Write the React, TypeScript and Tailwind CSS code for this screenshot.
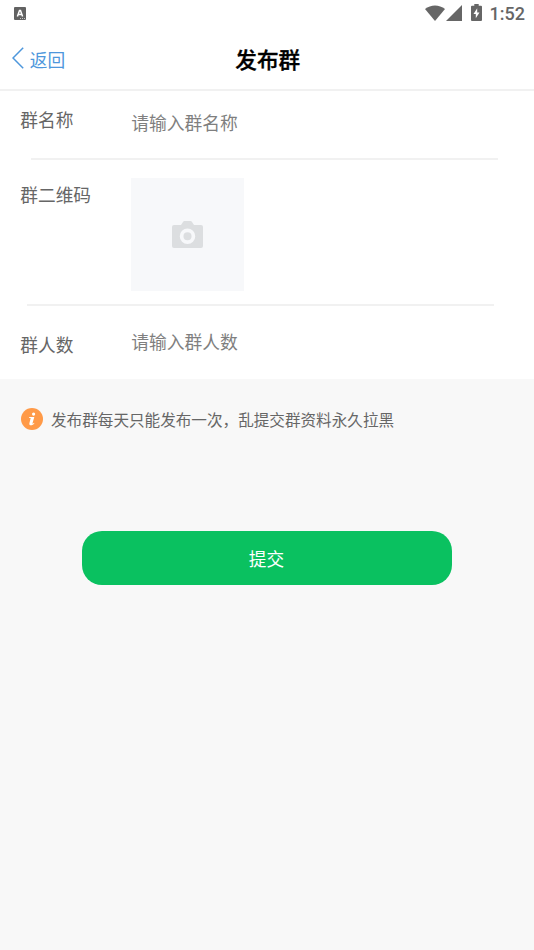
import type { ReactNode } from "react";

interface FieldProps {
    label: string;
    labelClass: string;
    className: string;
    children: ReactNode;
}

function Field({ label, labelClass, className, children }: FieldProps) {
    return (
        <div className={`flex items-start pl-[20.3px] ${className}`}>
            <label className={`w-[110.9px] shrink-0 text-[17.7px] leading-6 text-[#666] ${labelClass}`}>{label}</label>
            {children}
        </div>
    );
}

function StatusBar() {
    return (
        <div className="flex h-7 items-start justify-between pl-3.5 pr-[9px] text-[#666]">
            {/* Input method indicator */}
            <svg className="mt-[7px] h-[13px] w-3" viewBox="0 0 12 13">
                <rect width="12" height="13" rx="1" fill="#626262" />
                <path d="M3.4 9.5 5.5 3.6h1L8.6 9.5M4.2 7.6h3.6" fill="none" stroke="#fff" strokeWidth="1.5" />
                <path d="M6 11.5h1M8 11.5h1M10 11.5h1" stroke="#ddd" strokeWidth="0.8" />
            </svg>
            <div className="flex items-start">
                <svg className="mt-[5px] h-4 w-5" viewBox="0 0 20 16" fill="currentColor">
                    <path d="M0 4C5.8-.7 14.2-.7 20 4L10 16z" />
                </svg>
                <svg className="ml-[1px] mt-[5px] h-4 w-4" viewBox="0 0 16 16" fill="currentColor">
                    <path d="M16 0v16H0z" />
                </svg>
                <svg className="ml-[9px] mt-1 h-[17px] w-[11px]" viewBox="0 0 11 17">
                    <path d="M3.3 0h4.4v1.8H10a1 1 0 0 1 1 1V16a1 1 0 0 1-1 1H1a1 1 0 0 1-1-1V2.8a1 1 0 0 1 1-1h2.3z" fill="currentColor" />
                    <path d="M6.2 4.3 2.5 10h2.3v4.3L8.5 8.6H6.2z" fill="#fff" />
                </svg>
                <span className="ml-2 font-[Roboto] text-[18px] font-medium leading-7">1:52</span>
            </div>
        </div>
    );
}

export default function App() {
    return (
        <div className="min-h-[950px] w-full bg-[#f8f8f8] font-['Noto_Sans_CJK_SC',sans-serif]">
            <div className="bg-white">
                <StatusBar />
                <header className="grid h-[63px] grid-cols-3 items-center border-b-2 border-[#f1f1f1]">
                    <button className="flex items-center pl-3 text-[17.7px] leading-6 text-[#4e97dc]">
                        <svg className="mb-px mr-[5.8px] h-[22px] w-3" viewBox="0 0 12 22" fill="none" stroke="currentColor" strokeWidth="1.5">
                            <path d="M11.2.7 1 11l10.2 10.3" />
                        </svg>
                        返回
                    </button>
                    <h1 className="pl-[1.5px] text-center text-[21.6px] font-medium leading-8 text-black [-webkit-text-stroke:0.35px_black]">发布群</h1>
                </header>

                <Field label="群名称" labelClass="mt-4" className="h-[67px]">
                    <input className="mt-[19px] h-6 w-80 text-[17.8px] leading-6 outline-none placeholder:text-[#7f7f7f]" placeholder="请输入群名称" />
                </Field>
                <div className="ml-[31px] h-0.5 w-[467px] bg-[#f1f1f1]" />

                <Field label="群二维码" labelClass="mt-[22px]" className="h-36">
                    <button className="mt-[18px] flex h-[113px] w-[113px] items-center justify-center bg-[#f7f8fa]">
                        <svg className="h-[27px] w-[31px]" viewBox="0 0 31 27">
                            <path d="M2 4h7l2-3a2 2 0 0 1 1.5-1h6A2 2 0 0 1 20 1l2 3h7a2 2 0 0 1 2 2v19a2 2 0 0 1-2 2H2a2 2 0 0 1-2-2V6a2 2 0 0 1 2-2z" fill="#dcdee0" />
                            <circle cx="15.5" cy="15.3" r="5.9" fill="none" stroke="#f7f8fa" strokeWidth="3.7" />
                        </svg>
                    </button>
                </Field>
                <div className="ml-[27px] h-0.5 w-[467px] bg-[#f1f1f1]" />

                <Field label="群人数" labelClass="mt-[26px]" className="h-[73px]">
                    <input className="mt-[23px] h-6 w-80 text-[17.8px] leading-6 outline-none placeholder:text-[#7f7f7f]" placeholder="请输入群人数" />
                </Field>
            </div>

            <div className="flex items-center pl-[21px] pt-[29px]">
                <svg className="mr-2 h-[22px] w-[22px]" viewBox="0 0 22 22">
                    <circle cx="11" cy="11" r="11" fill="#ff9a48" />
                    <circle cx="12.6" cy="6.1" r="1.6" fill="#fff" />
                    <path d="M8.3 9h5l-1.8 6.3c-.2.8.5.6 1.5-.5l.4.4c-1.8 2.6-5.7 2.9-5 0L9.7 10H8.1z" fill="#fff" />
                </svg>
                <p className="text-[15.6px] leading-[22px] text-[#666]">发布群每天只能发布一次，乱提交群资料永久拉黑</p>
            </div>

            <button className="ml-[81.5px] mt-[101px] block h-[54px] w-[370px] rounded-[20px] bg-[#0ac160] pb-px text-[17.7px] leading-[52px] text-white">
                提交
            </button>
        </div>
    );
}
